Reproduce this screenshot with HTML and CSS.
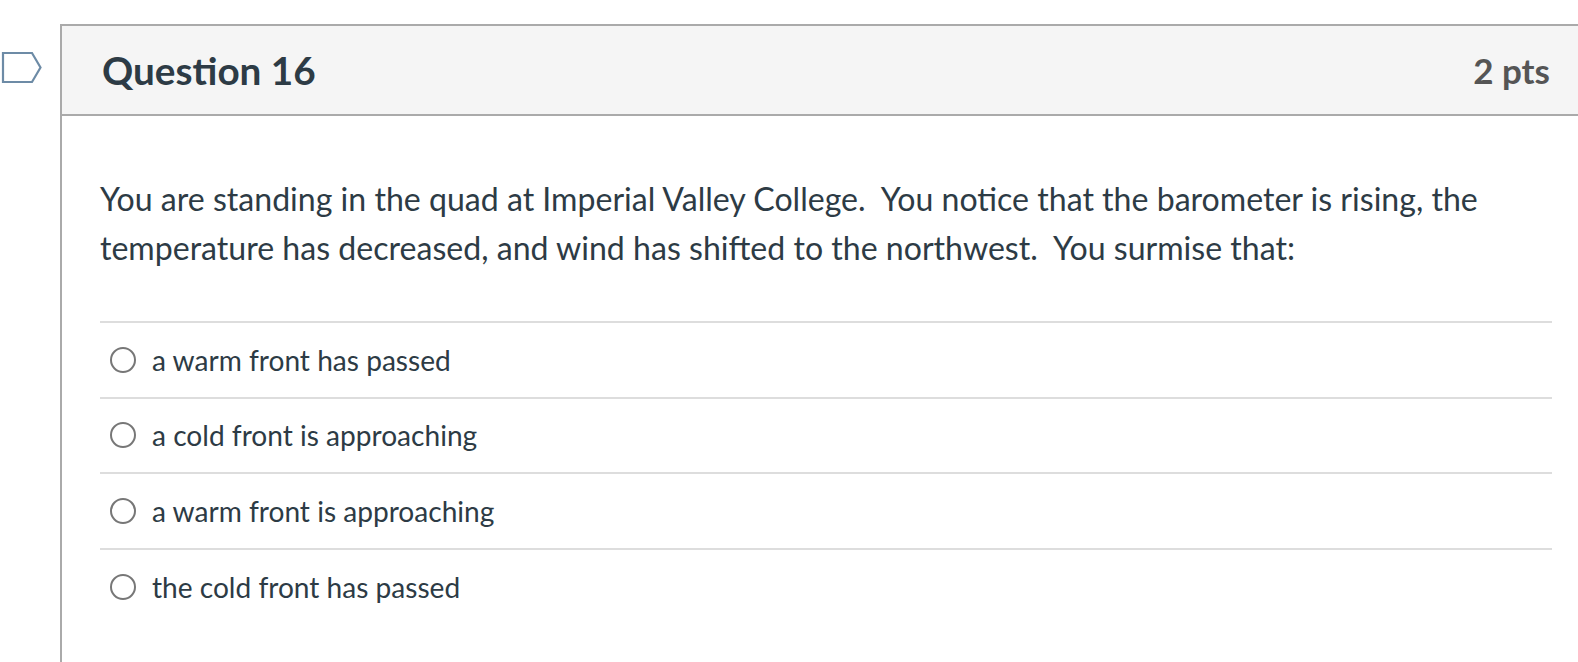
FILE: index.html
```html
<!DOCTYPE html>
<html>
<head>
<meta charset="utf-8">
<link rel="stylesheet" href="styles.css">
</head>
<body>
<div class="page">
  <div class="flag-col">
    <svg class="flag" width="42" height="34" viewBox="0 0 42 34">
      <path d="M3 2 H32 L40.5 16.5 L32 31 H3 Z" fill="none" stroke="#6d8ba6" stroke-width="2.2" stroke-linejoin="miter"/>
    </svg>
  </div>
  <div class="card">
    <div class="header">
      <h2 class="title">Question 16</h2>
      <div class="pts">2 pts</div>
    </div>
    <div class="body">
      <p class="question">You are standing in the quad at Imperial Valley College.&nbsp; You notice that the barometer is rising, the temperature has decreased, and wind has shifted to the northwest.&nbsp; You surmise that:</p>
      <div class="answers">
        <label class="answer"><span class="radio"></span><span class="atext">a warm front has passed</span></label>
        <label class="answer"><span class="radio"></span><span class="atext">a cold front is approaching</span></label>
        <label class="answer"><span class="radio"></span><span class="atext">a warm front is approaching</span></label>
        <label class="answer"><span class="radio"></span><span class="atext">the cold front has passed</span></label>
      </div>
    </div>
  </div>
</div>
</body>
</html>
```
FILE: styles.css
```css
html, body {
  margin: 0;
  padding: 0;
  background: #ffffff;
  overflow: hidden;
}
body {
  font-family: Lato, "Open Sans", sans-serif;
  color: #2d3b45;
}
.page {
  display: flex;
  align-items: flex-start;
  width: 1640px;
  height: 662px;
  overflow: hidden;
}
.flag-col {
  width: 60px;
  flex: none;
  padding-top: 51px;
}
.flag {
  display: block;
}
.card {
  flex: none;
  width: 1528px;
  margin-top: 24px;
  border: 2px solid #aaaaaa;
  height: 700px;
}
.header {
  box-sizing: border-box;
  display: flex;
  align-items: center;
  justify-content: space-between;
  height: 90px;
  background: #f5f5f5;
  border-bottom: 2px solid #aaaaaa;
  padding: 0 40px 1px 40px;
}
.title {
  margin: 0;
  font-size: 38.7px;
  font-weight: 700;
  color: #2d3b45;
}
.pts {
  font-size: 35px;
  font-weight: 700;
  color: #555555;
}
.body {
  padding: 59px 38px 0 38px;
}
.question {
  margin: 0;
  font-size: 32.1px;
  line-height: 48.5px;
}
.answers {
  margin-top: 49px;
}
.answer {
  display: flex;
  align-items: center;
  height: 73.67px;
  border-top: 2px solid #dddddd;
  padding-left: 10px;
}
.radio {
  width: 22px;
  height: 22px;
  border: 2px solid #777777;
  border-radius: 50%;
  flex: none;
}
.atext {
  margin-left: 16px;
  font-size: 28.1px;
}
```
